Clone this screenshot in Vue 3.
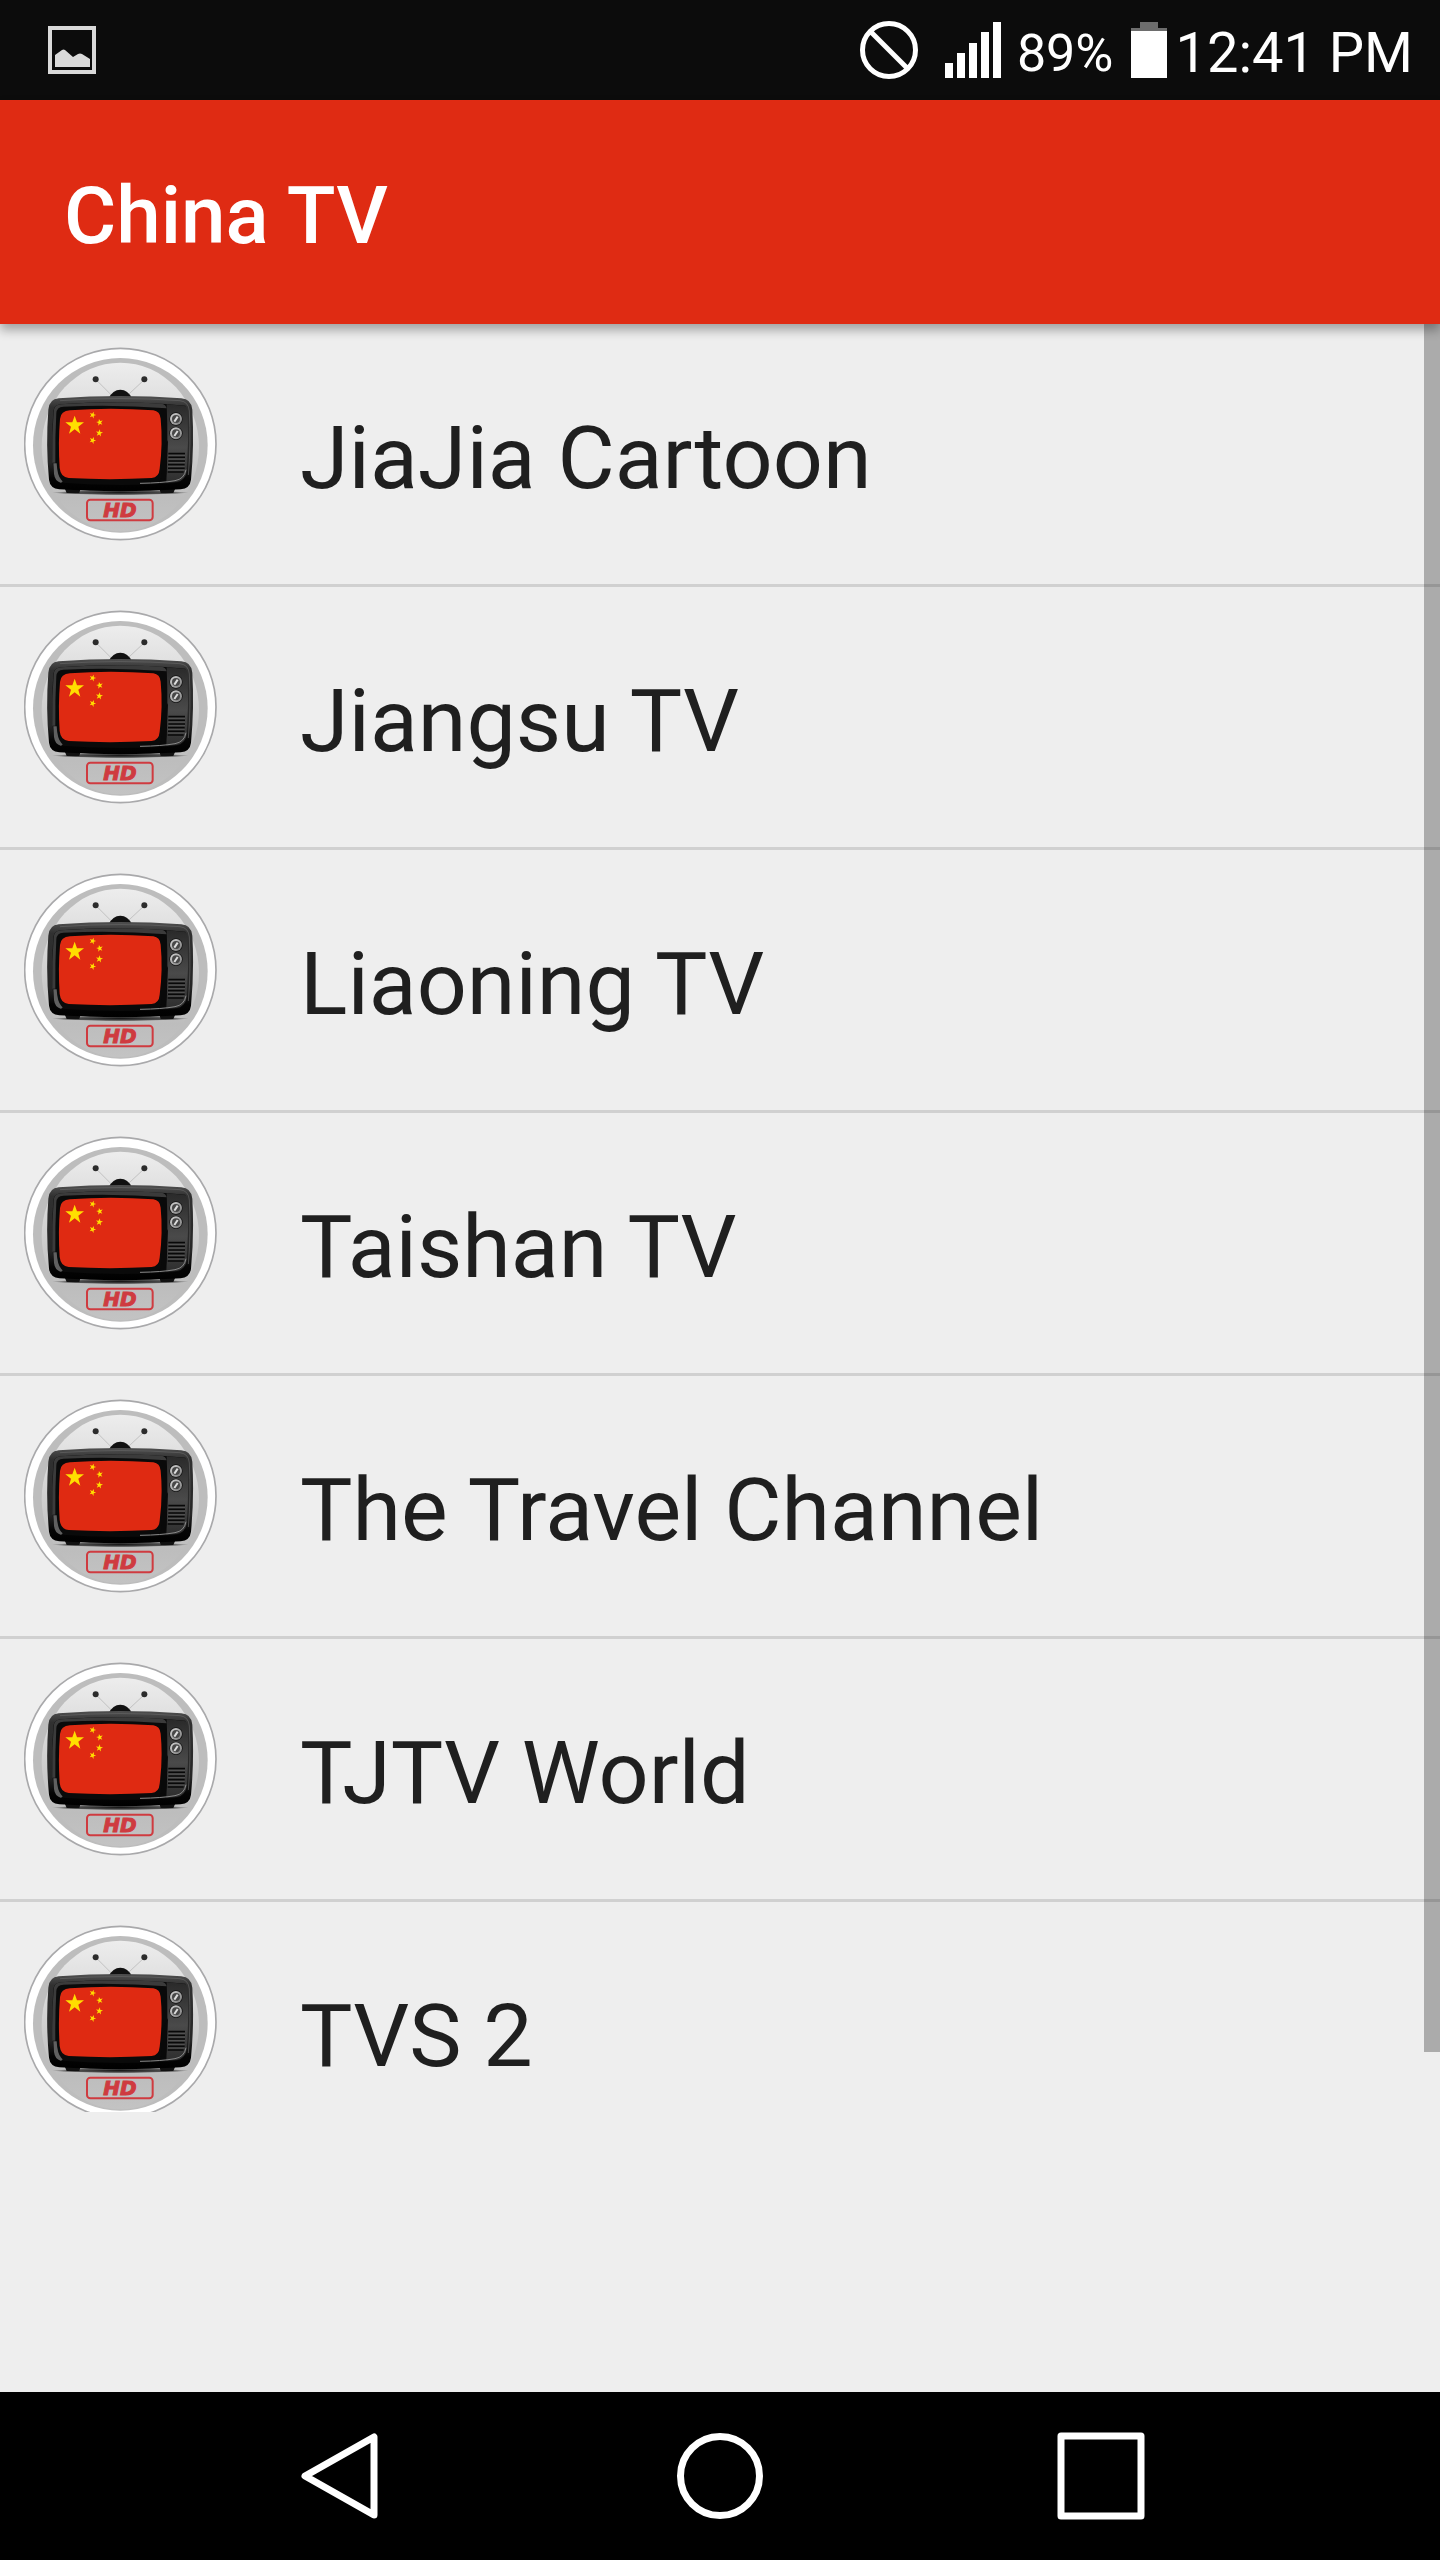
<script setup>
const channels = [
  'JiaJia Cartoon',
  'Jiangsu TV',
  'Liaoning TV',
  'Taishan TV',
  'The Travel Channel',
  'TJTV World',
  'TVS 2',
]
</script>

<template>
  <div class="screen">
    <header class="status">
      <svg class="icon-picture" viewBox="0 0 48 48" aria-hidden="true">
        <rect x="2" y="2" width="44" height="44" fill="none" stroke="#dadada" stroke-width="4" />
        <path d="M7 41V29l7-5q1.500-1 3 0l8 7 5-3q2-1 4 0l8 5v8z" fill="#dadada" />
      </svg>
      <div class="status-right">
        <svg class="icon-blocked" viewBox="0 0 58 58" aria-hidden="true">
          <circle cx="29" cy="29" r="26.500" fill="none" stroke="#fff" stroke-width="5" />
          <path d="M10 10l38 38" stroke="#fff" stroke-width="5" />
        </svg>
        <svg class="icon-signal" viewBox="0 0 56 56" fill="#fff" aria-hidden="true">
          <path d="M0 41h8v15H0zM12 31h8v25h-8zM24 21h8v35h-8zM36 10h8v46h-8zM48 0h8v56h-8z" />
        </svg>
        <span class="percent">89%</span>
        <svg class="icon-battery" viewBox="0 0 36 56" aria-hidden="true">
          <path d="M9 0h18v6h9v4H0V6h9z" fill="#6d6d6d" />
          <path d="M0 9h36v47H0z" fill="#fff" />
        </svg>
        <time class="clock">12:41 PM</time>
      </div>
    </header>

    <div class="appbar">
      <h1>China TV</h1>
    </div>

    <svg class="defs" aria-hidden="true">
      <defs>
        <linearGradient id="disc" x1="0" y1="0" x2="0" y2="1">
          <stop offset="0" stop-color="#ededed" />
          <stop offset="0.45" stop-color="#d2d2d2" />
          <stop offset="0.8" stop-color="#bdbdbd" />
          <stop offset="1" stop-color="#c3c3c3" />
        </linearGradient>
        <linearGradient id="case" x1="0" y1="0" x2="0" y2="1">
          <stop offset="0" stop-color="#505050" />
          <stop offset="0.12" stop-color="#303030" />
          <stop offset="0.7" stop-color="#262626" />
          <stop offset="0.86" stop-color="#050505" />
          <stop offset="1" stop-color="#000" />
        </linearGradient>
        <linearGradient id="panel" x1="0" y1="0" x2="0" y2="1">
          <stop offset="0" stop-color="#2a2a2a" />
          <stop offset="0.55" stop-color="#4a4a4a" />
          <stop offset="1" stop-color="#2e2e2e" />
        </linearGradient>
        <linearGradient id="knob" x1="0" y1="0" x2="1" y2="1">
          <stop offset="0" stop-color="#d8d8d8" />
          <stop offset="1" stop-color="#777" />
        </linearGradient>
        <radialGradient id="ground">
          <stop offset="0" stop-color="#000" stop-opacity="0.9" />
          <stop offset="0.75" stop-color="#000" stop-opacity="0.55" />
          <stop offset="1" stop-color="#000" stop-opacity="0" />
        </radialGradient>
        <path id="star" d="M0-29L7-9 28-9 11 4 17 25 0 12-17 25-11 4-28-9-7-9z" fill="#ffde00" />
        <symbol id="channel-logo" viewBox="42 36 579 582">
          <circle cx="331" cy="327" r="287" fill="#fff" stroke="#a9a9ab" stroke-width="5" />
          <circle cx="331" cy="331" r="262" fill="#bdbdbd" />
          <ellipse cx="331" cy="336" rx="236" ry="253" fill="url(#disc)" />
          <path d="M258 134l56 56M403 134l-60 56" stroke="#c2c2c2" stroke-width="3" />
          <circle cx="257" cy="133" r="9" fill="#2c2c2c" />
          <circle cx="403" cy="133" r="9" fill="#2c2c2c" />
          <path d="M296 190q12-26 35-26t35 26z" fill="#111" />
          <ellipse cx="331" cy="473" rx="205" ry="7" fill="url(#ground)" />
          <path d="M164 460h48l-4 14h-38zM448 460h48l-6 14h-38z" fill="#111" />
          <path d="M146 190Q331 176 514 190 544 192 547 224 553 330 543 434 540 460 512 463 331 475 148 463 120 460 117 434 107 330 115 224 118 192 146 190z" fill="url(#case)" />
          <path d="M150 197Q331 184 510 197 536 200 538 228 543 330 535 420" fill="none" stroke="#656565" stroke-width="2" />
          <path d="M152 208Q310 196 464 207L526 212Q535 300 528 410 526 440 500 444L460 447Q300 455 154 443 132 440 130 414 124 320 130 228 132 210 152 208z" fill="#0a0a0a" />
          <path d="M131 228q1-18 21-20Q310 197 454 206q14 2 16 14-150-12-310-5-20 1-21 20-4 70-3 148h-9q-2-80 4-155z" fill="#3b3b3b" />
          <path d="M130 385h10q2 38 14 50 8 6-2 8-17-4-20-26z" fill="#606060" />
          <path d="M470 208l50 4q12 1 13 16 4 90-3 180-2 27-30 33l-31 2q6-120 1-235z" fill="url(#panel)" />
          <path d="M474 315q-14 28-20 34v72q0 14-10 24 24-2 25-30z" fill="#090909" />
          <path d="M390 445q66-1 105-8 28-5 33-33" fill="none" stroke="#898989" stroke-width="3" />
          <path d="M180 226Q300 216 430 226 450 229 452 251 459 325 449 401 447 427 425 429 300 436 176 429 152 427 149 399 144 325 150 252 152 228 180 226z" fill="#df2a12" />
          <use href="#star" transform="translate(194 271)" />
          <use href="#star" transform="translate(248 240) rotate(18) scale(.36)" />
          <use href="#star" transform="translate(269 262) rotate(-12) scale(.36)" />
          <use href="#star" transform="translate(268 294) rotate(8) scale(.38)" />
          <use href="#star" transform="translate(248 316) rotate(22) scale(.36)" />
          <g v-for="y in [252, 295]" :key="y">
            <circle cx="498" :cy="y" r="20" fill="#111" />
            <circle cx="498" :cy="y" r="18" fill="url(#knob)" />
            <circle cx="498" :cy="y" r="12" fill="#474747" />
            <path :d="`M493 ${y + 8}l10-15`" stroke="#ddd" stroke-width="6" />
          </g>
          <path d="M475 356h50M475 367h50M475 378h50M474 389h50M474 400h50M473 411h48" stroke="#080808" stroke-width="5" />
          <path d="M475 361h50M475 372h50M475 383h50M474 394h50M474 405h50" stroke="#555" stroke-width="3" />
          <rect x="231" y="494" width="197" height="62" rx="10" fill="none" stroke="#cf3b40" stroke-width="6" />
          <text x="330" y="545" class="logo-text" text-anchor="middle">HD</text>
        </symbol>
      </defs>
    </svg>

    <main class="viewport">
      <ul class="channels">
        <li v-for="name in channels" :key="name">
          <button type="button" class="channel">
            <svg class="logo" aria-hidden="true"><use href="#channel-logo" /></svg>
            <span>{{ name }}</span>
          </button>
        </li>
      </ul>
      <div class="thumb"></div>
    </main>

    <div class="banner-slot"></div>

    <nav class="navbar">
      <button type="button" aria-label="Back">
        <svg viewBox="0 0 88 88"><path d="M79 5v78L10 44z" /></svg>
      </button>
      <button type="button" aria-label="Home">
        <svg viewBox="0 0 88 88"><circle cx="44" cy="44" r="39.500" /></svg>
      </button>
      <button type="button" aria-label="Recent apps">
        <svg viewBox="0 0 88 88"><rect x="4" y="4" width="80" height="80" /></svg>
      </button>
    </nav>
  </div>
</template>

<style>
body {
  background: #eee;
}
</style>

<style scoped>
.screen {
  display: flex;
  flex-direction: column;
  height: 100vh;
  background: #eee;
  color: #1f1f1f;
  font-family: Roboto, "Noto Sans", sans-serif;
}

svg {
  display: block;
  flex: none;
}

button {
  margin: 0;
  padding: 0;
  border: 0;
  background: none;
  color: inherit;
  font: inherit;
}

.status {
  display: flex;
  flex: none;
  align-items: center;
  justify-content: space-between;
  height: 100px;
  padding: 0 27px 0 48px;
  box-sizing: border-box;
  background: #0c0c0c;
  color: #fff;
}

.status-right {
  display: flex;
  align-items: center;
}

.icon-picture {
  width: 48px;
  height: 48px;
}

.icon-blocked {
  width: 58px;
  height: 58px;
  margin-right: 27px;
}

.icon-signal {
  width: 56px;
  height: 56px;
  margin-right: 16px;
}

.icon-battery {
  width: 36px;
  height: 56px;
  margin: 0 8px 0 18px;
}

.percent,
.clock {
  padding-top: 6px;
  white-space: nowrap;
}

.percent {
  font-size: 52px;
}

.clock {
  font-size: 56px;
}

.appbar {
  position: relative;
  z-index: 1;
  display: flex;
  flex: none;
  align-items: center;
  height: 224px;
  padding: 8px 64px 0;
  box-sizing: border-box;
  background: #df2b13;
  box-shadow: 0 6px 10px rgba(0, 0, 0, 0.32);
  color: #fff;
}

h1 {
  margin: 0;
  font-size: 80px;
  font-weight: 500;
}

.defs {
  position: absolute;
  width: 0;
  height: 0;
}

.logo-text {
  fill: #cf3b40;
  stroke: #cf3b40;
  stroke-width: 3px;
  font: italic bold 60px "DejaVu Sans", sans-serif;
}

.viewport {
  position: relative;
  flex: 1;
  min-height: 0;
  overflow: hidden;
}

.channels {
  margin: 0;
  padding: 0;
  list-style: none;
}

.channels li {
  border-bottom: 3px solid #d0d0d0;
}

.channel {
  display: flex;
  gap: 83px;
  width: 100%;
  height: 260px;
  padding: 23px 24px 0;
  box-sizing: border-box;
  font-size: 88px;
  line-height: 222px;
  text-align: left;
  white-space: nowrap;
}

.logo {
  width: 193px;
  height: 194px;
}

.thumb {
  position: absolute;
  top: 0;
  right: 0;
  width: 16px;
  height: 96.64%;
  background: rgba(0, 0, 0, 0.28);
}

.banner-slot {
  flex: none;
  height: 280px;
}

.navbar {
  display: grid;
  flex: none;
  grid-template-columns: repeat(3, 1fr);
  height: 168px;
  padding: 0 148px;
  background: #000;
}

.navbar button {
  display: flex;
  align-items: center;
  justify-content: center;
}

.navbar svg {
  width: 88px;
  height: 88px;
  fill: none;
  stroke: #fff;
  stroke-width: 7;
  stroke-linejoin: round;
}
</style>
